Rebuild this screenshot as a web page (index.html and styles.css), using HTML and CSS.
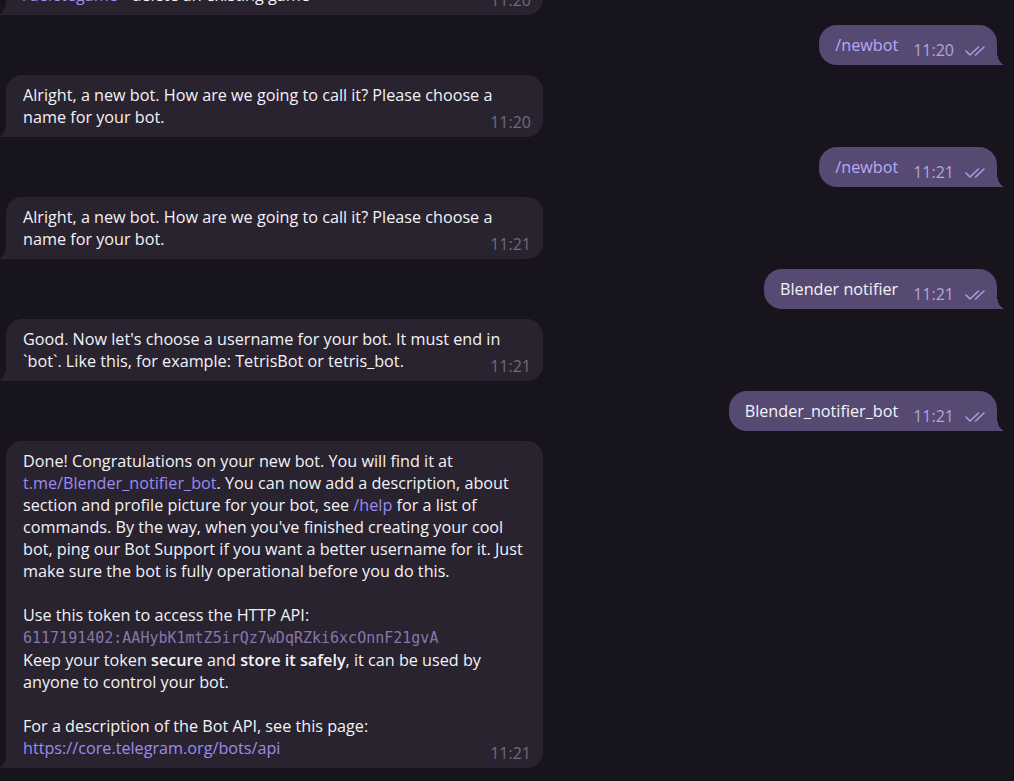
FILE: index.html
```html
<!DOCTYPE html>
<html lang="en">
<head>
<meta charset="utf-8">
<title>BotFather</title>
<link rel="stylesheet" href="styles.css">
</head>
<body>
<main class="chat">
  <div class="msg in">
    <p class="bubble"><span class="cmd">/deletegame</span> - delete an existing game<span class="meta"><span class="time">11:20</span></span></p>
  </div>
  <div class="msg out">
    <p class="bubble"><span class="cmd">/newbot</span><span class="meta"><span class="time">11:20</span><svg class="check" viewBox="0 0 22 10" width="22" height="10"><path d="M1 5 L5 9 L13.5 1 M10.5 9 L19 1"/></svg></span></p>
  </div>
  <div class="msg in">
    <p class="bubble">Alright, a new bot. How are we going to call it? Please choose a<br>name for your bot.<span class="meta"><span class="time">11:20</span></span></p>
  </div>
  <div class="msg out">
    <p class="bubble"><span class="cmd">/newbot</span><span class="meta"><span class="time">11:21</span><svg class="check" viewBox="0 0 22 10" width="22" height="10"><path d="M1 5 L5 9 L13.5 1 M10.5 9 L19 1"/></svg></span></p>
  </div>
  <div class="msg in">
    <p class="bubble">Alright, a new bot. How are we going to call it? Please choose a<br>name for your bot.<span class="meta"><span class="time">11:21</span></span></p>
  </div>
  <div class="msg out">
    <p class="bubble">Blender notifier<span class="meta"><span class="time">11:21</span><svg class="check" viewBox="0 0 22 10" width="22" height="10"><path d="M1 5 L5 9 L13.5 1 M10.5 9 L19 1"/></svg></span></p>
  </div>
  <div class="msg in">
    <p class="bubble">Good. Now let's choose a username for your bot. It must end in<br>`bot`. Like this, for example: TetrisBot or tetris_bot.<span class="meta"><span class="time">11:21</span></span></p>
  </div>
  <div class="msg out">
    <p class="bubble">Blender_notifier_bot<span class="meta"><span class="time">11:21</span><svg class="check" viewBox="0 0 22 10" width="22" height="10"><path d="M1 5 L5 9 L13.5 1 M10.5 9 L19 1"/></svg></span></p>
  </div>
  <div class="msg in">
    <p class="bubble">Done! Congratulations on your new bot. You will find it at<br><span class="link">t.me/Blender_notifier_bot</span>. You can now add a description, about<br>section and profile picture for your bot, see <span class="link">/help</span> for a list of<br>commands. By the way, when you've finished creating your cool<br>bot, ping our Bot Support if you want a better username for it. Just<br>make sure the bot is fully operational before you do this.<br><br>Use this token to access the HTTP API:<br><code class="token">6117191402:AAHybK1mtZ5irQz7wDqRZki6xcOnnF21gvA</code><br>Keep your token <b>secure</b> and <b>store it safely</b>, it can be used by<br>anyone to control your bot.<br><br>For a description of the Bot API, see this page:<br><span class="link">https://core.telegram.org/bots/api</span><span class="meta"><span class="time">11:21</span></span></p>
  </div>
</main>
</body>
</html>
```

FILE: styles.css
```css
html, body {
  margin: 0;
  padding: 0;
  height: 100%;
  overflow: hidden;
  background: #17141d;
}

.chat {
  height: 100%;
  box-sizing: border-box;
  display: flex;
  flex-direction: column;
  justify-content: flex-end;
  gap: 10px;
  padding-bottom: 13px;
  font-family: "Open Sans", "Noto Sans", sans-serif;
  font-size: 16.2px;
  line-height: 22px;
  color: #f3f2f7;
}

.msg {
  display: flex;
  flex-shrink: 0;
}

.msg.in {
  justify-content: flex-start;
  padding-left: 6px;
}

.msg.out {
  justify-content: flex-end;
  padding-right: 17px;
}

.bubble {
  position: relative;
  margin: 0;
  box-sizing: border-box;
  padding: 9px 12px 9px 17px;
}

.in .bubble {
  width: 537px;
  background: #29232f;
  border-radius: 16px 16px 16px 0;
}

.in .bubble::before {
  content: "";
  position: absolute;
  left: -8px;
  bottom: 0;
  width: 8px;
  height: 14px;
  background: radial-gradient(8px 14px at 0 0, transparent 98%, #29232f 100%);
}

.out .bubble {
  background: #564a73;
  border-radius: 18px 18px 0 18px;
  padding: 9px 10px 9px 16px;
}

.out .bubble::after {
  content: "";
  position: absolute;
  right: -8px;
  bottom: 0;
  width: 8px;
  height: 14px;
  background: radial-gradient(8px 14px at 100% 0, transparent 98%, #564a73 100%);
}

.meta {
  float: right;
  margin: 10px 0 0 15px;
  line-height: 12px;
  font-size: 16px;
  white-space: nowrap;
}

.in .time {
  color: #6f6b79;
}

.out .time {
  color: #b1a4da;
}

.check {
  margin-left: 11px;
  vertical-align: baseline;
  fill: none;
  stroke: #a99be4;
  stroke-width: 1.6;
  stroke-linecap: round;
  stroke-linejoin: round;
}

.cmd {
  color: #b9a9f8;
}

.in .cmd,
.link {
  color: #9a8cf0;
}

.token {
  font-family: "DejaVu Sans Mono", "Liberation Mono", monospace;
  font-size: 15px;
  color: #8577ad;
}

b {
  font-weight: 600;
}
```
